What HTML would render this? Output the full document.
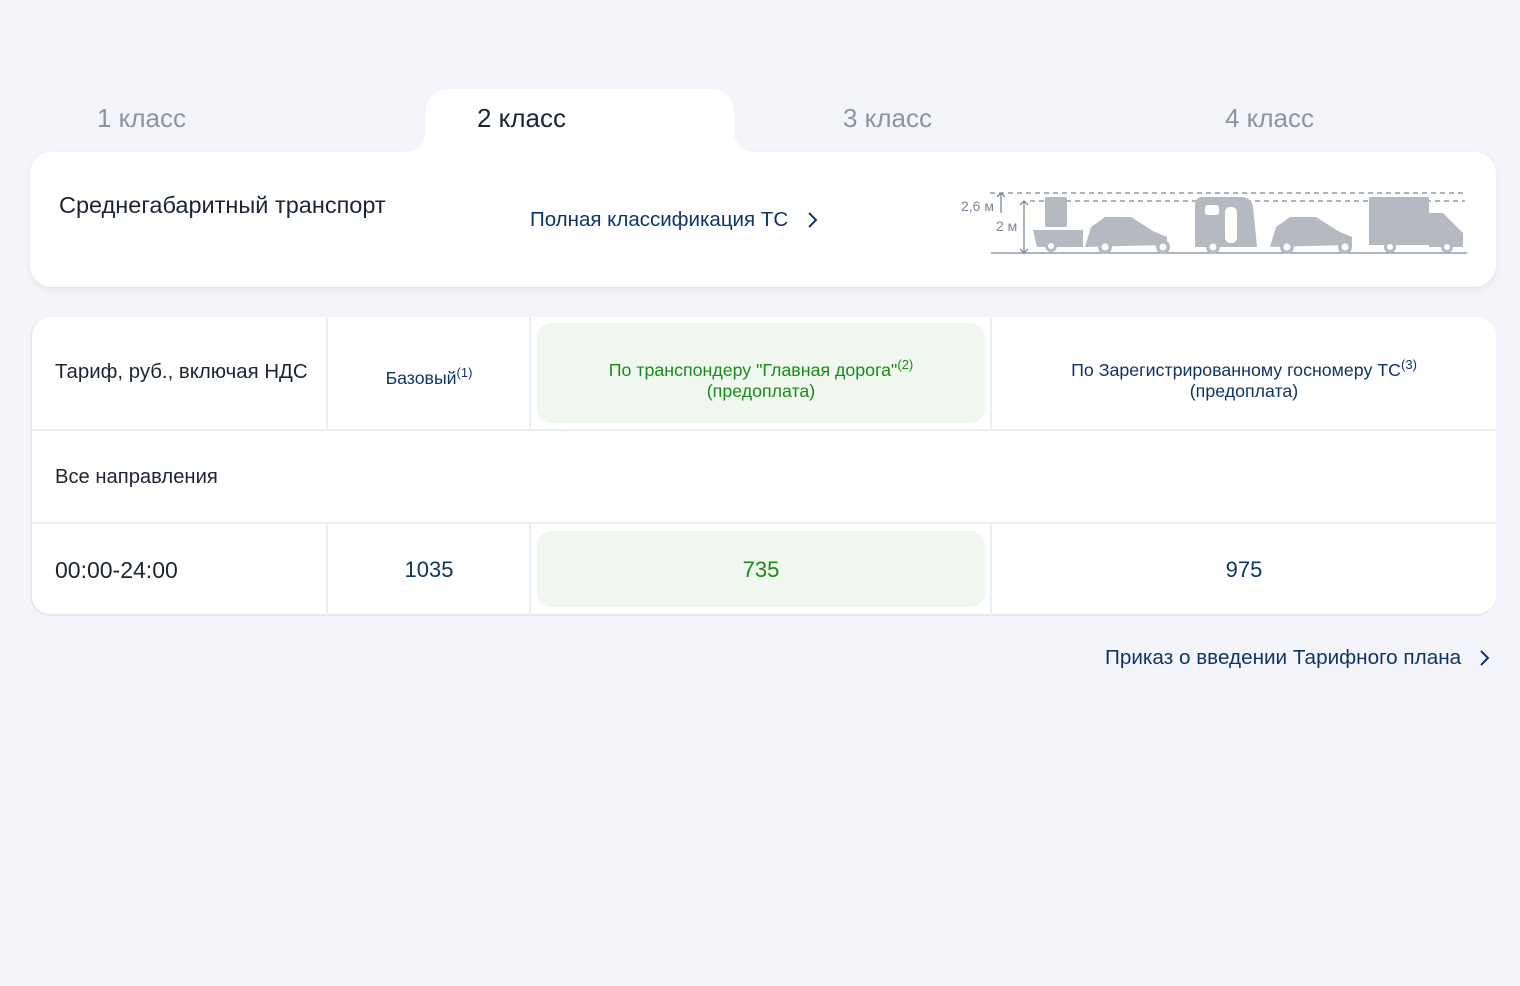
<!DOCTYPE html>
<html><head><meta charset="utf-8"><style>
*{box-sizing:border-box;margin:0;padding:0}
body{width:1520px;height:986px;background:#f4f5fa;font-family:"Liberation Sans",sans-serif;color:#1b2533;position:relative;overflow:hidden}
.tab{position:absolute;top:103px;font-size:26px;color:#8e939c}
.tabact{position:absolute;left:426px;top:89px;width:308px;height:70px;background:#fff;border-radius:22px 22px 0 0}
.corner{position:absolute;top:132px;width:20px;height:20px;background:radial-gradient(circle at var(--p) ,transparent 19.5px,#fff 20px)}
.card{position:absolute;left:30px;top:152px;width:1466px;height:135px;background:#fff;border-radius:22px;box-shadow:0 3px 8px rgba(0,0,0,.07)}
.tbl{position:absolute;left:30px;top:317px;width:1466px;height:299px;background:#fff;border-radius:20px;border-left:2px solid #e6e8ec;border-bottom:2px solid #e6e8ec}
.hl{position:absolute;background:#eff7ee;border-radius:14px}
.vl{position:absolute;width:2px;background:#eceef1}
.hr{position:absolute;height:2px;background:#eceef1;left:30px;width:1466px}
.t{position:absolute;white-space:nowrap}
sup{font-size:13px;vertical-align:7px}
</style></head><body>
<div class="card"></div>
<div class="tabact"></div>
<div class="corner" style="left:406px;--p:0 0"></div>
<div class="corner" style="left:734px;--p:100% 0"></div>
<div class="tab" style="left:97px">1 класс</div>
<div class="tab" style="left:477px;color:#1b2533">2 класс</div>
<div class="tab" style="left:843px">3 класс</div>
<div class="tab" style="left:1225px">4 класс</div>
<div class="t" style="left:59px;top:192px;font-size:23.5px">Среднегабаритный транспорт</div>
<div class="t" style="left:530px;top:208px;font-size:20.5px;color:#0f3467">Полная классификация ТС</div>
<svg style="position:absolute;left:804px;top:210px" width="16" height="20"><path d="M5 3l7 7-7 7" stroke="#0f3467" stroke-width="2" fill="none"/></svg>
<svg style="position:absolute;left:955px;top:185px" width="515" height="75" viewBox="0 0 515 75">
<g stroke="#7c8699" stroke-width="1.3" fill="none">
<path d="M35 8H510" stroke-dasharray="5 4"/><path d="M75 16H510" stroke-dasharray="5 4"/>
<path d="M46 8v20M42 12l4-4 4 4"/><path d="M69 16v52M65 20l4-4 4 4M65 64l4 4 4-4"/>
<path d="M36 68H512"/></g>
<text x="6" y="26" font-size="14" fill="#7c8699" font-family="Liberation Sans">2,6 м</text>
<text x="41" y="46" font-size="14" fill="#7c8699" font-family="Liberation Sans">2 м</text>
<g fill="#b5b9c1">
<rect x="90" y="12" width="22" height="30" rx="2"/>
<path d="M78 45h50v17H82z"/>
<circle cx="96" cy="61" r="6"/>
<path d="M130 62l6-20 14-10h26l22 14 14 6v8z"/>
<circle cx="150" cy="62" r="7"/><circle cx="208" cy="62" r="7"/>
<path d="M240 20q0-8 8-8h38q10 0 12 10l4 40h-62z"/>
<circle cx="258" cy="62" r="7"/>
<path d="M315 62l6-20 14-10h26l22 14 14 6v8z"/>
<circle cx="332" cy="62" r="7"/><circle cx="390" cy="62" r="7"/>
<rect x="414" y="12" width="60" height="48"/>
<path d="M474 28h14l20 20v14h-34z"/>
<circle cx="435" cy="62" r="6"/><circle cx="492" cy="62" r="6"/>
</g>
<g fill="#fff"><circle cx="96" cy="61" r="3"/><circle cx="150" cy="62" r="3.5"/><circle cx="208" cy="62" r="3.5"/><circle cx="258" cy="62" r="3.5"/><circle cx="332" cy="62" r="3.5"/><circle cx="390" cy="62" r="3.5"/><circle cx="435" cy="62" r="3"/><circle cx="492" cy="62" r="3"/>
<rect x="250" y="20" width="14" height="10" rx="3"/><rect x="270" y="22" width="12" height="36" rx="5"/></g>
</svg>
<div class="tbl"></div>
<div class="hl" style="left:537px;top:323px;width:448px;height:100px"></div>
<div class="hl" style="left:537px;top:531px;width:448px;height:76px"></div>
<div class="vl" style="left:326px;top:317px;height:113px"></div>
<div class="vl" style="left:529px;top:317px;height:113px"></div>
<div class="vl" style="left:990px;top:317px;height:113px"></div>
<div class="vl" style="left:326px;top:523px;height:93px"></div>
<div class="vl" style="left:529px;top:523px;height:93px"></div>
<div class="vl" style="left:990px;top:523px;height:93px"></div>
<div class="hr" style="top:429px"></div>
<div class="hr" style="top:522px"></div>
<div class="t" style="left:55px;top:361px;font-size:20.4px">Тариф, руб., включая НДС</div>
<div class="t" style="left:329px;width:200px;text-align:center;top:365px;font-size:17.7px;color:#0f3467">Базовый<sup>(1)</sup></div>
<div class="t" style="left:537px;width:448px;text-align:center;top:354px;font-size:17.8px;line-height:21px;color:#1a8a1a">По транспондеру "Главная дорога"<sup>(2)</sup><br>(предоплата)</div>
<div class="t" style="left:992px;width:504px;text-align:center;top:354px;font-size:17.8px;line-height:21px;color:#0f3467">По Зарегистрированному госномеру ТС<sup>(3)</sup><br>(предоплата)</div>
<div class="t" style="left:55px;top:466px;font-size:20.2px">Все направления</div>
<div class="t" style="left:55px;top:557px;font-size:23px">00:00-24:00</div>
<div class="t" style="left:329px;width:200px;text-align:center;top:557px;font-size:22px;color:#0f3467">1035</div>
<div class="t" style="left:537px;width:448px;text-align:center;top:557px;font-size:22px;color:#1a8a1a">735</div>
<div class="t" style="left:992px;width:504px;text-align:center;top:557px;font-size:22px;color:#0f3467">975</div>
<div class="t" style="left:1105px;top:646px;font-size:20.7px;color:#0f3467">Приказ о введении Тарифного плана</div>
<svg style="position:absolute;left:1476px;top:648px" width="16" height="20"><path d="M5 3l7 7-7 7" stroke="#0f3467" stroke-width="2" fill="none"/></svg>
</body></html>
